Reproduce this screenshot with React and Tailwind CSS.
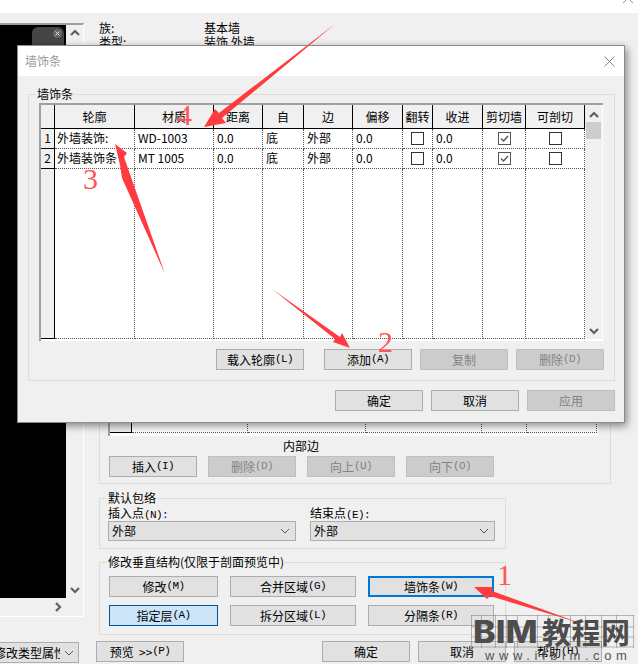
import React from 'react';

const rows = [
  { id: 1, name: '外墙装饰:', material: 'WD-1003' },
  { id: 2, name: '外墙装饰条', material: 'MT 1005' },
];

const headers = ['', '轮廓', '材质', '距离', '自', '边', '偏移', '翻转', '收进', '剪切墙', '可剖切'];

const gridCols = 'grid grid-cols-[14px_80px_79px_49px_41px_49px_50px_30px_50px_43px_59px]';

function Chevron({ dir = 'down', className = '' }) {
  const pts = {
    up: '1,7 5,3 9,7',
    down: '1,3 5,7 9,3',
    right: '3,1 7,5 3,9',
  };
  return (
    <svg width="10" height="10" viewBox="0 0 10 10" className={className}>
      <polyline points={pts[dir]} fill="none" stroke="#606060" strokeWidth="2.2" />
    </svg>
  );
}

function Btn({ label, hotkey, width = 'w-[88px]', disabled, variant, className = '' }) {
  let look = 'bg-[#e1e1e1] border border-[#adadad] text-black';
  if (disabled) look = 'bg-[#cccccc] border border-[#bfbfbf] text-[#838383]';
  if (variant === 'selected') look = 'bg-[#cce4f7] border border-[#005499] text-black';
  if (variant === 'focus') look = 'bg-[#e1e1e1] border-2 border-[#0078d7] text-black';
  return (
    <div className={`${width} h-[21px] flex items-center justify-center text-[12px] leading-none shrink-0 ${look} ${className}`}>
      {label}
      {hotkey && <span className="font-['Liberation_Mono',monospace] text-[11px] tracking-[-0.6px]">{hotkey}</span>}
    </div>
  );
}

function Select({ value, width }) {
  return (
    <div className={`${width} h-[20px] bg-[#e1e1e1] border border-[#adadad] flex items-center justify-between pl-[3px] pr-[5px] text-[12px]`}>
      <span>{value}</span>
      <svg width="10" height="6" viewBox="0 0 10 6">
        <polyline points="1,1 5,5 9,1" fill="none" stroke="#555" strokeWidth="1" />
      </svg>
    </div>
  );
}

function GroupBox({ title, className = '', children }) {
  return (
    <fieldset className={`border border-[#dcdcdc] ${className}`}>
      <legend className="ml-[7px] px-px text-[12px] leading-[16px]">{title}</legend>
      {children}
    </fieldset>
  );
}

function CheckBox({ checked }) {
  return (
    <div className={`w-[13px] h-[13px] bg-white border flex items-center justify-center ${checked ? 'border-[#555]' : 'border-[#333]'}`}>
      {checked && (
        <svg width="11" height="11" viewBox="0 0 11 11">
          <polyline points="2,5.5 4.5,8 9,3" fill="none" stroke="#555" strokeWidth="1.3" />
        </svg>
      )}
    </div>
  );
}

function StripGrid() {
  return (
    <div className="flex h-[238px] w-[564px] border-t-2 border-[#a0a0a0] bg-white">
      <div className="flex flex-col w-[546px] border-l-2 border-[#a0a0a0]">
        <div className={`${gridCols} h-[24px] bg-[#f0f0f0] shrink-0`}>
          {headers.map((h, i) => (
            <div key={i} className="border-r border-b border-black flex items-center justify-center text-[12px] whitespace-nowrap overflow-hidden">
              {h}
            </div>
          ))}
        </div>
        {rows.map((r) => (
          <div key={r.id} className={`${gridCols} h-[20px] shrink-0 text-[12px]`}>
            <div className="bg-[#f0f0f0] border-r border-b border-black flex items-center justify-center pb-px">{r.id}</div>
            <div className="border-r border-b border-dotted border-[#555] pl-[2px] pb-px flex items-center overflow-hidden whitespace-nowrap">{r.name}</div>
            <div className="border-r border-b border-dotted border-[#555] pl-[3px] pb-px flex items-center">{r.material}</div>
            <div className="border-r border-b border-dotted border-[#555] pl-[3px] pb-px flex items-center">0.0</div>
            <div className="border-r border-b border-dotted border-[#555] pl-[3px] pb-px flex items-center">底</div>
            <div className="border-r border-b border-dotted border-[#555] pl-[3px] pb-px flex items-center">外部</div>
            <div className="border-r border-b border-dotted border-[#555] pl-[3px] pb-px flex items-center">0.0</div>
            <div className="border-r border-b border-dotted border-[#555] flex items-center justify-center"><CheckBox /></div>
            <div className="border-r border-b border-dotted border-[#555] pl-[3px] pb-px flex items-center">0.0</div>
            <div className="border-r border-b border-dotted border-[#555] flex items-center justify-center"><CheckBox checked /></div>
            <div className="border-r border-b border-dotted border-[#555] flex items-center justify-center"><CheckBox /></div>
          </div>
        ))}
        <div className={`${gridCols} flex-1 mb-[2px]`}>
          <div className="bg-[#f0f0f0] border-r border-b border-black" />
          {headers.slice(1).map((h) => (
            <div key={h} className="border-r border-b border-dotted border-[#555]" />
          ))}
        </div>
      </div>
      <div className="w-[18px] mb-[2px] mr-px bg-[#f0f0f0] flex flex-col items-center">
        <Chevron dir="up" className="mt-[5px] shrink-0" />
        <div className="w-[15px] h-[17px] mt-[2px] bg-[#cdcdcd]" />
        <Chevron dir="down" className="mt-auto mb-[3px]" />
      </div>
    </div>
  );
}

function StripDialog() {
  return (
    <div className="absolute left-[17px] top-[45px] w-[608px] h-[378px] bg-[#f0f0f0] border border-[#8c8c8c] shadow-[2px_3px_8px_rgba(0,0,0,0.45)]">
      <div className="h-[30px] bg-white flex items-center justify-between pl-[7px] pr-[9px]">
        <span className="text-[12px] text-[#999]">墙饰条</span>
        <svg width="11" height="11" viewBox="0 0 11 11">
          <path d="M0.5 0.5L10.5 10.5M10.5 0.5L0.5 10.5" stroke="#808080" strokeWidth="1" />
        </svg>
      </div>
      <div className="pt-[10px] pl-[10px] pr-[9px]">
        <GroupBox title="墙饰条">
          <div className="pt-[1px] pl-[10px]">
            <StripGrid />
          </div>
          <div className="flex justify-end gap-[8px] pt-[8px] pb-[10px] pr-[10px]">
            <Btn label="载入轮廓" hotkey="(L)" className="mr-[12px]" />
            <Btn label="添加" hotkey="(A)" />
            <Btn label="复制" disabled />
            <Btn label="删除" hotkey="(D)" disabled />
          </div>
        </GroupBox>
        <div className="flex justify-end gap-[8px] mt-[9px]">
          <Btn label="确定" />
          <Btn label="取消" />
          <Btn label="应用" disabled />
        </div>
      </div>
    </div>
  );
}

function PreviewPane() {
  return (
    <div className="w-[84px] shrink-0">
      <div className="mt-[10px] h-[594px] border-t-2 border-b border-r border-t-[#a0a0a0] border-b-white border-r-white flex flex-col">
        <div className="flex flex-1">
          <div className="w-[66px] bg-black flex justify-end pt-[2px] pr-[2px]">
            <div className="w-[32px] h-[40px] bg-[#454545] rounded-md flex justify-end p-[2px]">
              <div className="w-[9px] h-[9px] rounded-full bg-[#666] flex items-center justify-center">
                <svg width="5" height="5" viewBox="0 0 5 5">
                  <path d="M0.5 0.5L4.5 4.5M4.5 0.5L0.5 4.5" stroke="#ddd" strokeWidth="1" />
                </svg>
              </div>
            </div>
          </div>
          <div className="flex-1 flex flex-col items-center">
            <Chevron dir="up" className="mt-[3px]" />
            <Chevron dir="down" className="mt-auto mb-[3px]" />
          </div>
        </div>
        <div className="h-[18px] w-[66px] flex items-center justify-end pr-[3px]">
          <Chevron dir="right" />
        </div>
      </div>
      <div className="mt-[25px] w-[79px] h-[21px] bg-[#e1e1e1] border border-l-0 border-[#adadad] flex items-center justify-between pr-[4px] text-[12px]">
        <div className="w-[60px] overflow-hidden whitespace-nowrap">
          <span className="block -ml-[6px]">修改类型属性</span>
        </div>
        <svg width="10" height="6" viewBox="0 0 10 6">
          <polyline points="1,1 5,5 9,1" fill="none" stroke="#555" strokeWidth="1" />
        </svg>
      </div>
    </div>
  );
}

function MainColumn() {
  return (
    <div className="flex-1 pl-[15px] flex flex-col">
      <div className="pt-[8px] text-[12px] leading-[14px]">
        <div className="flex"><span className="w-[105px]">族:</span><span>基本墙</span></div>
        <div className="flex"><span className="w-[105px]">类型:</span><span>装饰 外墙</span></div>
      </div>
      <div className="mt-[3px] h-[432px] w-[512px] border border-[#dcdcdc] flex flex-col justify-end pb-[6px] pl-[9px]">
        <div className="-ml-px h-[40px] w-[491px] bg-white border-l-2 border-[#a0a0a0] flex pb-[3px]">
          <div className="w-[22px] bg-[#f0f0f0] border-r border-b border-black" />
          <div className="w-[116px] border-r border-b border-dotted border-[#555]" />
          <div className="w-[118px] border-r border-b border-dotted border-[#555]" />
          <div className="w-[116px] border-r border-b border-dotted border-[#555]" />
          <div className="w-[45px] border-r border-b border-dotted border-[#555]" />
          <div className="w-[70px] border-r border-b border-dotted border-[#555]" />
        </div>
        <div className="h-[20px] flex items-center pl-[174px] pb-px text-[12px]">内部边</div>
        <div className="flex gap-[11px]">
          <Btn label="插入" hotkey="(I)" />
          <Btn label="删除" hotkey="(D)" disabled />
          <Btn label="向上" hotkey="(U)" disabled />
          <Btn label="向下" hotkey="(O)" disabled />
        </div>
      </div>
      <GroupBox title="默认包络" className="mt-[6px] w-[407px]">
        <div className="flex gap-[14px] pl-[8px] pb-[7px]">
          <div>
            <div className="h-[15px] text-[12px] leading-[14px]">插入点<span className="font-['Liberation_Mono',monospace] text-[11px] tracking-[-0.6px]">(N):</span></div>
            <Select value="外部" width="w-[188px]" />
          </div>
          <div>
            <div className="h-[15px] text-[12px] leading-[14px]">结束点<span className="font-['Liberation_Mono',monospace] text-[11px] tracking-[-0.6px]">(E):</span></div>
            <Select value="外部" width="w-[185px]" />
          </div>
        </div>
      </GroupBox>
      <GroupBox title="修改垂直结构(仅限于剖面预览中)" className="mt-[5px] w-[407px]">
        <div className="pt-[6px] pl-[9px] pb-[8px] flex flex-col gap-[8px]">
          <div className="flex gap-[12px]">
            <Btn label="修改" hotkey="(M)" width="w-[109px]" />
            <Btn label="合并区域" hotkey="(G)" width="w-[126px]" />
            <Btn label="墙饰条" hotkey="(W)" width="w-[126px]" variant="focus" />
          </div>
          <div className="flex gap-[12px]">
            <Btn label="指定层" hotkey="(A)" width="w-[109px]" variant="selected" />
            <Btn label="拆分区域" hotkey="(L)" width="w-[126px]" />
            <Btn label="分隔条" hotkey="(R)" width="w-[126px]" />
          </div>
        </div>
      </GroupBox>
      <div className="mt-[6px] -ml-[3px] flex">
        <Btn label={'预览\u00a0\u00a0>>'} hotkey="(P)" />
        <div className="flex gap-[8px] ml-[138px]">
          <Btn label="确定" />
          <Btn label="取消" />
          <Btn label="帮助" hotkey="(H)" />
        </div>
      </div>
    </div>
  );
}

function Annotations() {
  return (
    <>
      <svg width="638" height="664" viewBox="0 0 638 664" className="absolute left-0 top-0">
        <polygon points="335,24 222,118 226,123 204,127 215,109 219,113" fill="#ff3b3f" />
        <polygon points="115,144 127,153 124,157 165,274 122,178 120,165" fill="#ff3b3f" />
        <polygon points="272,289 340,337 342,333 350,348 333,342 335,339" fill="#ff3b3f" />
        <polygon points="474,587 493,587 492,591 580,623 490,596 487,599" fill="#ff3b3f" />
      </svg>
      <span className="absolute left-[177px] top-[100px] font-['Liberation_Serif',serif] text-[30px] leading-[30px] text-[#f55]">4</span>
      <span className="absolute left-[83px] top-[164px] font-['Liberation_Serif',serif] text-[30px] leading-[30px] text-[#f55]">3</span>
      <span className="absolute left-[378px] top-[327px] font-['Liberation_Serif',serif] text-[30px] leading-[30px] text-[#f55]">2</span>
      <span className="absolute left-[497px] top-[560px] font-['Liberation_Serif',serif] text-[30px] leading-[30px] text-[#f55]">1</span>
    </>
  );
}

function Watermark() {
  const xs = [0, 10, 24, 35, 46, 66, 77, 99, 114, 130, 145, 162];
  const ys = [0.5, 12, 22, 32];
  return (
    <div className="absolute left-[471px] top-[615px] w-[167px] h-[49px]">
      <svg width="163" height="33" viewBox="0 0 163 33" className="absolute left-0 top-0">
        {xs.map((x) => (
          <line key={x} x1={x + 0.5} y1="0" x2={x + 0.5} y2="33" stroke="#777" strokeOpacity="0.5" strokeWidth="1" />
        ))}
        {ys.map((y) => (
          <line key={y} x1="0" y1={y} x2="163" y2={y} stroke="#777" strokeOpacity="0.5" strokeWidth="1" />
        ))}
      </svg>
      <div className="absolute left-[2px] top-[0px] flex items-center h-[33px] whitespace-nowrap text-[#4d4d4d]">
        <span className="block w-[69px] origin-left scale-x-[1.1] font-['Inter',sans-serif] font-extrabold text-[31px] leading-none">BIM</span>
        <span className="font-bold text-[29px] leading-none tracking-[0.5px]">教程网</span>
      </div>
      <div className="absolute left-[14px] top-[33px] font-['Liberation_Sans',sans-serif] text-[13px] leading-[15px] tracking-[4.6px] whitespace-nowrap text-[#555]">
        www.ifbim.com
      </div>
    </div>
  );
}

export default function App() {
  return (
    <div className="relative w-[638px] h-[664px] overflow-hidden bg-[#f0f0f0] text-black font-['Noto_Sans_CJK_SC',sans-serif]">
      <div className="h-[13px] bg-white flex justify-end pr-[5px]">
        <svg width="10" height="4" viewBox="0 0 10 4">
          <path d="M0 3L3 0M10 3L7 0" stroke="#999" strokeWidth="1" />
        </svg>
      </div>
      <div className="flex">
        <PreviewPane />
        <MainColumn />
      </div>
      <StripDialog />
      <Annotations />
      <Watermark />
    </div>
  );
}
